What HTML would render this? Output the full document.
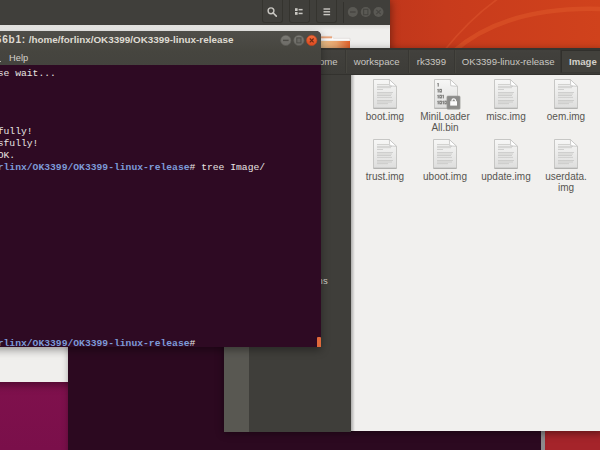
<!DOCTYPE html>
<html><head><meta charset="utf-8">
<style>
*{margin:0;padding:0;box-sizing:border-box}
html,body{width:600px;height:450px;overflow:hidden;background:#7a0f48;font-family:"Liberation Sans",sans-serif}
.abs{position:absolute}
#wall-top{left:380px;top:0;width:220px;height:60px;background:linear-gradient(90deg,#bf361b 0%,#c83b1c 30%,#d0421c 100%);overflow:hidden}
#wall-mag{left:0;top:370px;width:80px;height:80px;background:linear-gradient(180deg,#80114d,#7a0f4a)}
#wall-red{left:530px;top:425px;width:70px;height:25px;background:#a5242a}
#back{left:-10px;top:0;width:399.5px;height:381.6px;background:#f0efed;box-shadow:0 2px 8px 1px rgba(0,0,0,0.4)}
#back-hdr{left:0;top:0;width:400px;height:25px;background:#403f3b}
.hbtn{position:absolute;top:0;width:21px;height:23px;border:1px solid #35342f;border-top:none;border-radius:0 0 3px 3px;background:#403f3b}
.wc{position:absolute;width:11px;height:11px;border-radius:50%}
#term2{left:68px;top:300px;width:473px;height:160px;background:#2c0920;box-shadow:0 0 6px 0 rgba(0,0,0,0.3)}
#fm{left:224px;top:47.5px;width:380px;height:383.5px;background:#f1f0ee}
#fm-hdr{left:0;top:0;width:380px;height:27.5px;background:linear-gradient(#42413d,#3d3c38);border-top:2.5px solid #363531;border-bottom:1.5px solid #33322e}
#fm-side{left:0;top:27px;width:127px;height:357px;background:#3f3e3a}
#fm-strip{left:0;top:27px;width:25px;height:357px;background:#595852}
.sep{position:absolute;top:0.5px;width:1px;height:22.5px;background:#383733;box-shadow:1px 0 0 #46453f}
.pb{position:absolute;top:6.6px;font-size:9.6px;color:#c9c7c2;white-space:nowrap}
#term{left:-20px;top:31px;width:341px;height:316px;background:#2e0a23;border-radius:5px 5px 0 0;overflow:hidden}
#term-sh{left:-20px;top:31px;width:341px;height:316px;border-radius:5px 5px 0 0;box-shadow:0 3px 9px 0 rgba(0,0,0,0.38)}
#fm-sh{left:224px;top:47.5px;width:380px;height:383.5px;box-shadow:0 2px 8px 0 rgba(0,0,0,0.45)}
#term-tb{left:0;top:0;width:341px;height:34.4px;background:linear-gradient(#4f4e49,#46453f 60%,#44433e)}
.tl{position:absolute;left:0;font-family:"Liberation Mono",monospace;font-size:9.7px;line-height:11.73px;color:#e8e4e1;white-space:pre}
.pr{color:#7d9ad8;font-weight:bold}
.lbl{position:absolute;width:60px;text-align:center;font-size:10px;line-height:10.5px;color:#575551}
</style></head><body>
<div id="wall-top" class="abs">
  <svg width="220" height="60" style="position:absolute;left:0;top:0">
    <path d="M63,52 Q92,16 122,-4" stroke="#d9502a" stroke-width="1.6" fill="none" opacity="0.7"/>
    <path d="M73,52 Q125,6 222,9" stroke="#de5729" stroke-width="4.5" fill="none" opacity="0.55"/>
  </svg>
</div>
<div id="wall-mag" class="abs"></div>
<div id="wall-red" class="abs"></div>

<div id="back" class="abs">
  <div id="back-hdr" class="abs">
    <div class="hbtn" style="left:272px"></div>
    <div class="hbtn" style="left:299px"></div>
    <div class="hbtn" style="left:326px"></div>
    <svg class="abs" style="left:276px;top:6px" width="14" height="12"><circle cx="5" cy="4.8" r="2.9" stroke="#c9c7c2" stroke-width="1.4" fill="none"/><path d="M7.2,7 L10.3,10.1" stroke="#c9c7c2" stroke-width="1.6" stroke-linecap="round"/></svg>
    <svg class="abs" style="left:304px;top:8px" width="10" height="8"><rect x="1" y="0.2" width="2.6" height="2.8" fill="#c9c7c2"/><rect x="1" y="4" width="2.6" height="2.8" fill="#c9c7c2"/><rect x="4.6" y="0.9" width="4" height="1.5" fill="#c9c7c2"/><rect x="4.6" y="4.7" width="4" height="1.5" fill="#c9c7c2"/></svg>
    <svg class="abs" style="left:333px;top:8px" width="9" height="8"><rect x="0.5" y="0.3" width="6.6" height="1.4" fill="#c9c7c2"/><rect x="0.5" y="3.1" width="6.6" height="1.4" fill="#c9c7c2"/><rect x="0.5" y="5.9" width="6.6" height="1.4" fill="#c9c7c2"/></svg>
    <div class="abs" style="left:353px;top:2px;width:1px;height:21px;background:#33322e"></div>
    <svg class="abs" style="left:356px;top:5.8px" width="40" height="12">
      <circle cx="6.8" cy="6" r="5" fill="#5a5954"/><rect x="4" y="5.3" width="5.6" height="1.4" fill="#464541"/>
      <circle cx="19.75" cy="6" r="5" fill="#5a5954"/><rect x="17.6" y="3.3" width="4.3" height="5.4" fill="none" stroke="#464541" stroke-width="1.1"/>
      <circle cx="32.5" cy="6" r="5" fill="#5a5954"/><path d="M30.3,3.8 L34.7,8.2 M34.7,3.8 L30.3,8.2" stroke="#464541" stroke-width="1.1"/>
    </svg>
  </div>
  <div class="abs" style="left:0;top:25px;width:400px;height:5px;background:linear-gradient(#e0dfdc,#f0efed)"></div>
  <svg class="abs" style="left:330px;top:34.5px" width="32" height="14">
    <defs><linearGradient id="fg" x1="0" x2="1"><stop offset="0" stop-color="#ecc48e"/><stop offset="0.55" stop-color="#e9a36c"/><stop offset="1" stop-color="#e1602a"/></linearGradient></defs>
    <path d="M0,1.3 L12,1.3 L13.5,3.3 L30,3.3 L30,6 L0,6 Z" fill="#fbfaf9" stroke="#d6d4d0" stroke-width="0.6"/>
    <rect x="1" y="1.4" width="11" height="1.9" fill="#e9a47a"/>
    <rect x="0" y="6" width="30" height="7.5" fill="url(#fg)"/>
  </svg>
  
</div>

<div id="term2" class="abs"></div>
<div class="abs" style="left:541px;top:430px;width:4px;height:20px;background:#8d8a8c"></div>

<div id="fm-sh" class="abs"></div>
<div id="fm" class="abs">
  <div id="fm-hdr" class="abs">
    <div class="sep" style="left:121px"></div>
    <div class="sep" style="left:184px"></div>
    <div class="sep" style="left:230px"></div>
    <div class="sep" style="left:336.3px"></div>
    <div class="abs" style="left:337.3px;top:0.5px;width:43px;height:22.5px;background:#42413c;border-top:1px solid #31302c;border-left:1px solid #31302c;border-bottom:1px solid #3a3935"></div>
    <span class="pb" style="left:95px">ome</span>
    <span class="pb" style="left:129.8px">workspace</span>
    <span class="pb" style="left:192.7px">rk3399</span>
    <span class="pb" style="left:237.8px">OK3399-linux-release</span>
    <span class="pb" style="left:345px;font-weight:bold;color:#d4d1cb">Image</span>
  </div>
  <div id="fm-side" class="abs"></div>
  <div id="fm-strip" class="abs"></div>
  <div class="abs" style="left:127px;top:27px;width:4px;height:357px;background:linear-gradient(90deg,rgba(0,0,0,0.28),rgba(0,0,0,0))"></div>
  <span class="abs" style="left:93.6px;top:227.5px;font-size:9.5px;color:#cfcdc8">ns</span>
</div>

<!-- icons -->
<svg width="0" height="0" style="position:absolute">
  <defs>
    <linearGradient id="dg" x1="0" y1="0" x2="0" y2="1"><stop offset="0" stop-color="#f7f7f6"/><stop offset="1" stop-color="#dededd"/></linearGradient>
    <g id="doc">
      <path d="M0.5,0.5 L16.3,0.5 L23.5,7.3 L23.5,29.3 L0.5,29.3 Z" fill="url(#dg)" stroke="#c2c2c0" stroke-width="0.9"/>
      <path d="M0.5,29.3 L23.5,29.3" stroke="#a9a9a7" stroke-width="0.9"/>
      <path d="M16.3,0.5 L16.8,6.8 L23.5,7.3 Z" fill="#ffffff" stroke="#c2c2c0" stroke-width="0.8"/>
    </g>
    <g id="lines" fill="#bcbcba">
      <rect x="4" y="5" width="12" height="0.6"/><rect x="4" y="6.9" width="15" height="0.6"/><rect x="4" y="8.5" width="14" height="0.6"/><rect x="4" y="10.1" width="6" height="0.6"/>
      <rect x="4" y="13.1" width="16" height="0.6"/><rect x="4" y="14.7" width="15" height="0.6"/><rect x="4" y="16.3" width="14" height="0.6"/><rect x="4" y="17.9" width="15" height="0.6"/>
      <rect x="4" y="21.1" width="16" height="0.6"/><rect x="4" y="22.7" width="15" height="0.6"/><rect x="4" y="24.5" width="11" height="0.6"/>
    </g>
  </defs>
</svg>
<svg class="abs" style="left:373px;top:79px" width="25" height="31"><use href="#doc"/><use href="#lines"/></svg>
<svg class="abs" style="left:433.5px;top:79px" width="28" height="31"><use href="#doc"/>
  <rect x="3.70" y="4.00" width="1" height="3.6" fill="#747472"/><rect x="3.00" y="4.30" width="0.8" height="0.8" fill="#8a8a88"/><rect x="3.70" y="9.90" width="1" height="3.6" fill="#747472"/><rect x="3.00" y="10.20" width="0.8" height="0.8" fill="#8a8a88"/><rect x="5.80" y="10.30" width="1.6" height="2.8" stroke="#747472" stroke-width="0.85" fill="none"/><rect x="3.70" y="15.80" width="1" height="3.6" fill="#747472"/><rect x="3.00" y="16.10" width="0.8" height="0.8" fill="#8a8a88"/><rect x="5.80" y="16.20" width="1.6" height="2.8" stroke="#747472" stroke-width="0.85" fill="none"/><rect x="8.80" y="15.80" width="1" height="3.6" fill="#747472"/><rect x="8.10" y="16.10" width="0.8" height="0.8" fill="#8a8a88"/><rect x="3.70" y="21.70" width="1" height="3.6" fill="#747472"/><rect x="3.00" y="22.00" width="0.8" height="0.8" fill="#8a8a88"/><rect x="5.80" y="22.10" width="1.6" height="2.8" stroke="#747472" stroke-width="0.85" fill="none"/><rect x="8.80" y="21.70" width="1" height="3.6" fill="#747472"/><rect x="8.10" y="22.00" width="0.8" height="0.8" fill="#8a8a88"/><rect x="10.90" y="22.10" width="1.6" height="2.8" stroke="#747472" stroke-width="0.85" fill="none"/>
  <rect x="12.9" y="17" width="13.2" height="13.2" rx="1" fill="#8b8b89" stroke="#a2a2a0" stroke-width="0.6"/>
  <path d="M18,22.4 L18,21.5 A1.75,1.6 0 0 1 21.5,21.5 L21.5,22.4" stroke="#fafafa" stroke-width="1.3" fill="none"/>
  <rect x="16.2" y="22.2" width="6.8" height="4.4" fill="#fafafa"/>
</svg>
<svg class="abs" style="left:494px;top:79px" width="25" height="31"><use href="#doc"/><use href="#lines"/></svg>
<svg class="abs" style="left:554px;top:79px" width="25" height="31"><use href="#doc"/><use href="#lines"/></svg>
<svg class="abs" style="left:373px;top:139px" width="25" height="31"><use href="#doc"/><use href="#lines"/></svg>
<svg class="abs" style="left:433px;top:139px" width="25" height="31"><use href="#doc"/><use href="#lines"/></svg>
<svg class="abs" style="left:494px;top:139px" width="25" height="31"><use href="#doc"/><use href="#lines"/></svg>
<svg class="abs" style="left:554px;top:139px" width="25" height="31"><use href="#doc"/><use href="#lines"/></svg>

<div class="lbl" style="left:355px;top:112px">boot.img</div>
<div class="lbl" style="left:415px;top:112px">MiniLoader<br>All.bin</div>
<div class="lbl" style="left:476px;top:112px">misc.img</div>
<div class="lbl" style="left:536px;top:112px">oem.img</div>
<div class="lbl" style="left:355px;top:172px">trust.img</div>
<div class="lbl" style="left:415px;top:172px">uboot.img</div>
<div class="lbl" style="left:476px;top:172px">update.img</div>
<div class="lbl" style="left:536px;top:172px">userdata.<br>img</div>

<div id="term-sh" class="abs"></div>
<div id="term" class="abs">
  <div id="term-tb" class="abs">
    <span class="abs" style="left:-46.04px;top:3.2px;font-weight:bold;font-size:9.9px;color:#dfdbd2;white-space:nowrap"><span style="letter-spacing:0.75px;font-size:10.1px">r@forlinx-666b1:</span> /home/forlinx/OK3399/OK3399-linux-release</span>
    <svg class="abs" style="left:299px;top:3px" width="40" height="13">
      <defs><linearGradient id="cg" x1="0" y1="0" x2="0" y2="1"><stop offset="0" stop-color="#f26d3d"/><stop offset="1" stop-color="#dc4a20"/></linearGradient>
      <linearGradient id="mg" x1="0" y1="0" x2="0" y2="1"><stop offset="0" stop-color="#7c7b75"/><stop offset="1" stop-color="#6c6b66"/></linearGradient></defs>
      <circle cx="6.8" cy="6.4" r="5.2" fill="url(#mg)" stroke="#5c5b56" stroke-width="0.6"/><rect x="4" y="5.7" width="5.6" height="1.4" fill="#4c4b46"/>
      <circle cx="19.9" cy="6.4" r="5.2" fill="url(#mg)" stroke="#5c5b56" stroke-width="0.6"/><rect x="17.8" y="3.9" width="4.2" height="5" fill="#6a6964" stroke="#4c4b46" stroke-width="1"/>
      <circle cx="32.7" cy="6.4" r="5.2" fill="url(#cg)" stroke="#c4461f" stroke-width="0.6"/><path d="M30.8,4.5 L34.6,8.3 M34.6,4.5 L30.8,8.3" stroke="#6b2a14" stroke-width="1.1"/>
    </svg>
    <span class="abs" style="left:29px;top:21.5px;font-size:9.3px;color:#d6d3cc;white-space:nowrap">Help</span><div class="abs" style="left:20px;top:29.5px;width:1.4px;height:1.4px;background:#b8b5ae"></div>
  </div>
  <div class="abs" style="left:337.3px;top:306.2px;width:3.6px;height:10px;border-radius:1px 1px 0 0;background:#e0683a"></div>
  <div class="tl" style="top:36.8px;left:17.7px">se wait...




fully!
sfully!
OK.
<span class="pr">rlinx/OK3399/OK3399-linux-release</span># tree Image/














<span class="pr">rlinx/OK3399/OK3399-linux-release</span>#</div>
</div>
</body></html>
